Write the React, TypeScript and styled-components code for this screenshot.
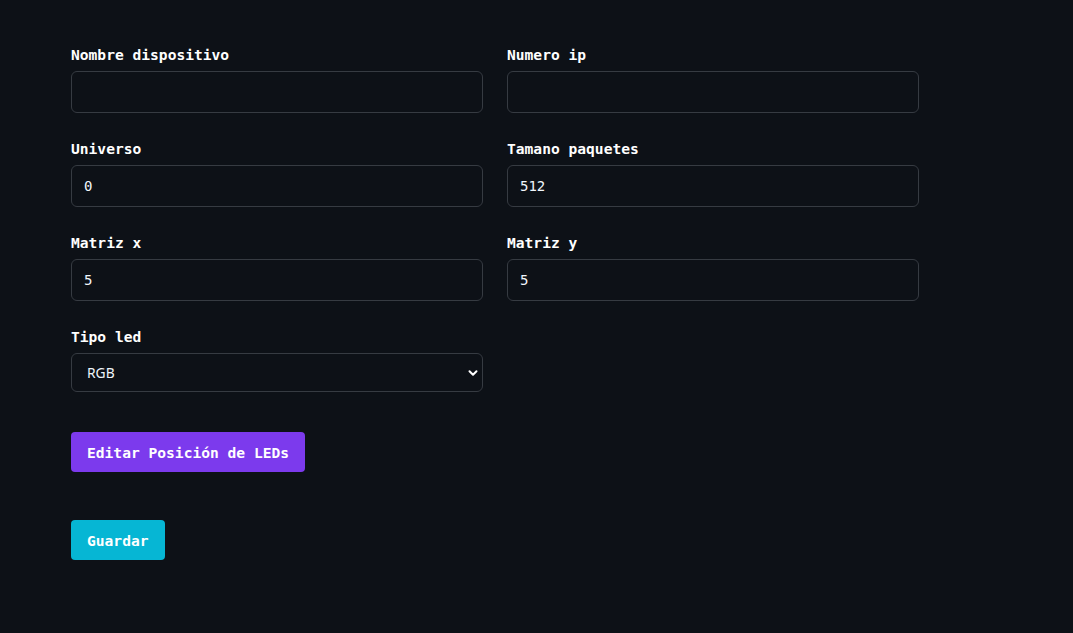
import React from "react";
import styled, { createGlobalStyle } from "styled-components";

const Global = createGlobalStyle`
  html, body { margin: 0; padding: 0; background: #0d1117; }
  body { font-family: "DejaVu Sans Mono", "Liberation Mono", monospace; color: #f0f6fc; }
`;

const Page = styled.div`
  min-height: 633px;
  padding: 45px 0 0 71px;
  box-sizing: border-box;
`;

const Grid = styled.div`
  display: grid;
  grid-template-columns: 412px 412px;
  column-gap: 24px;
  row-gap: 26px;
`;

const Field = styled.div`
  display: flex;
  flex-direction: column;
  gap: 6px;
`;

const Label = styled.label`
  font-family: "DejaVu Sans Mono", monospace;
  font-weight: 700;
  font-size: 14.6px;
  line-height: 20px;
  color: #ffffff;
`;

const Input = styled.input`
  box-sizing: border-box;
  height: 42px;
  width: 100%;
  padding: 0 12px;
  background: #0d1117;
  border: 1px solid #363b42;
  border-radius: 6px;
  color: #f0f6fc;
  font-family: "DejaVu Sans Mono", monospace;
  font-size: 14px;
  outline: none;
`;

const SelectWrap = styled.div`
  position: relative;
  height: 39px;
`;

const Select = styled.select`
  box-sizing: border-box;
  appearance: none;
  height: 39px;
  width: 100%;
  padding: 0 15px;
  background: #0d1117;
  border: 1px solid #363b42;
  border-radius: 6px;
  color: #f0f6fc;
  font-family: "Noto Sans", "Open Sans", sans-serif;
  font-size: 13.8px;
  outline: none;
`;

const Chevron = styled.svg`
  position: absolute;
  right: 4px;
  top: 14px;
  pointer-events: none;
`;

const Actions = styled.div`
  display: flex;
  flex-direction: column;
  align-items: flex-start;
  gap: 48px;
  margin-top: 40px;
`;

const Button = styled.button<{ $bg: string }>`
  height: 40px;
  padding: 0 16px;
  border: none;
  border-radius: 4px;
  background: ${(p) => p.$bg};
  color: #ffffff;
  font-family: "DejaVu Sans Mono", monospace;
  font-weight: 700;
  font-size: 14.6px;
  cursor: pointer;
`;

export default function App() {
  return (
    <>
      <Global />
      <Page>
        <Grid>
          <Field>
            <Label>Nombre dispositivo</Label>
            <Input defaultValue="" />
          </Field>
          <Field>
            <Label>Numero ip</Label>
            <Input defaultValue="" />
          </Field>
          <Field>
            <Label>Universo</Label>
            <Input defaultValue="0" />
          </Field>
          <Field>
            <Label>Tamano paquetes</Label>
            <Input defaultValue="512" />
          </Field>
          <Field>
            <Label>Matriz x</Label>
            <Input defaultValue="5" />
          </Field>
          <Field>
            <Label>Matriz y</Label>
            <Input defaultValue="5" />
          </Field>
          <Field>
            <Label>Tipo led</Label>
            <SelectWrap>
              <Select defaultValue="RGB">
                <option>RGB</option>
                <option>RGBW</option>
              </Select>
              <Chevron width="12" height="12" viewBox="0 0 12 12">
                <path d="M2.5 4.2 L6 7.7 L9.5 4.2" fill="none" stroke="#ffffff" strokeWidth="2" strokeLinecap="round" strokeLinejoin="round" />
              </Chevron>
            </SelectWrap>
          </Field>
        </Grid>
        <Actions>
          <Button $bg="#7c3aed">Editar Posición de LEDs</Button>
          <Button $bg="#06b6d4">Guardar</Button>
        </Actions>
      </Page>
    </>
  );
}
